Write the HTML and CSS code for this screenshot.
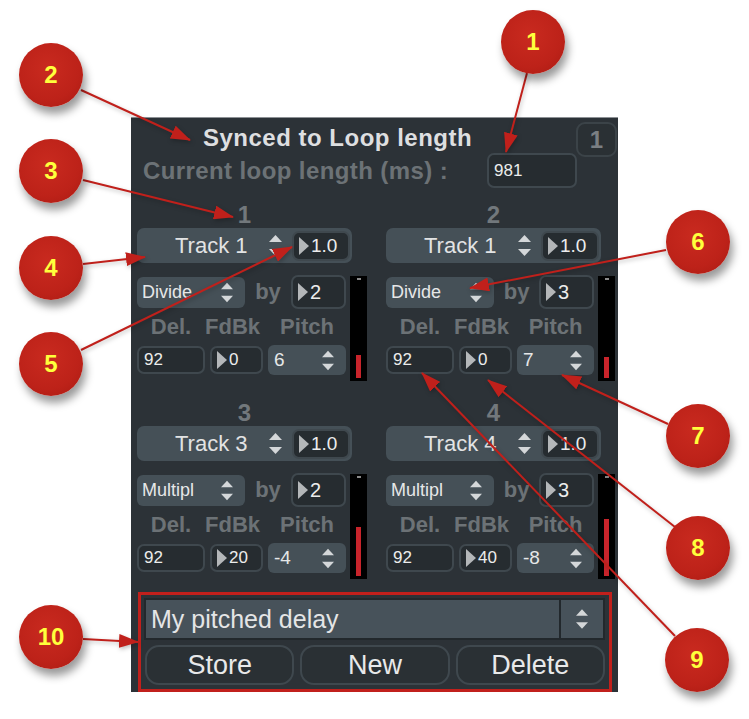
FILE: index.html
```html
<!DOCTYPE html>
<html lang="en">
<head>
    <meta charset="UTF-8">
    <title>Synced to Loop length</title>
    <link rel="stylesheet" href="styles.css">
</head>
<body>
<div class="page">

    <div class="panel">
        <div class="head">
            <div class="title">Synced to Loop length</div>
            <div class="badge">1</div>
            <div class="loop-label">Current loop length (ms) :</div>
            <div class="numbox loop-box">981</div>
        </div>

        <div class="voices">
            <!-- voice 1 -->
            <div class="voice">
                <div class="voice-num">1</div>
                <div class="track">
                    <span class="track-name">Track 1</span>
                    <svg class="updown" width="13" height="21" viewBox="0 0 13 21"><polygon points="0,7 6.5,0 13,7"/><polygon points="0,14 13,14 6.5,21"/></svg>
                    <div class="numbox track-box"><i class="play"></i>1.0</div>
                </div>
                <div class="voice-body">
                    <div class="controls">
                        <div class="row-mode">
                            <div class="menu mode-menu">Divide<svg class="updown" width="12" height="21" viewBox="0 0 13 21"><polygon points="0,7 6.5,0 13,7"/><polygon points="0,14 13,14 6.5,21"/></svg></div>
                            <span class="label by">by</span>
                            <div class="numbox by-box"><i class="play"></i>2</div>
                        </div>
                        <div class="row-labels">
                            <span class="label">Del.</span>
                            <span class="label">FdBk</span>
                            <span class="label">Pitch</span>
                        </div>
                        <div class="row-values">
                            <div class="numbox small">92</div>
                            <div class="numbox small"><i class="play"></i>0</div>
                            <div class="menu pitch-menu">6<svg class="updown" width="12" height="21" viewBox="0 0 13 21"><polygon points="0,7 6.5,0 13,7"/><polygon points="0,14 13,14 6.5,21"/></svg></div>
                        </div>
                    </div>
                    <div class="meter"><i class="meter-peak"></i><i class="meter-bar" style="height: 23px"></i></div>
                </div>
            </div>

            <!-- voice 2 -->
            <div class="voice">
                <div class="voice-num">2</div>
                <div class="track">
                    <span class="track-name">Track 1</span>
                    <svg class="updown" width="13" height="21" viewBox="0 0 13 21"><polygon points="0,7 6.5,0 13,7"/><polygon points="0,14 13,14 6.5,21"/></svg>
                    <div class="numbox track-box"><i class="play"></i>1.0</div>
                </div>
                <div class="voice-body">
                    <div class="controls">
                        <div class="row-mode">
                            <div class="menu mode-menu">Divide<svg class="updown" width="12" height="21" viewBox="0 0 13 21"><polygon points="0,7 6.5,0 13,7"/><polygon points="0,14 13,14 6.5,21"/></svg></div>
                            <span class="label by">by</span>
                            <div class="numbox by-box"><i class="play"></i>3</div>
                        </div>
                        <div class="row-labels">
                            <span class="label">Del.</span>
                            <span class="label">FdBk</span>
                            <span class="label">Pitch</span>
                        </div>
                        <div class="row-values">
                            <div class="numbox small">92</div>
                            <div class="numbox small"><i class="play"></i>0</div>
                            <div class="menu pitch-menu">7<svg class="updown" width="12" height="21" viewBox="0 0 13 21"><polygon points="0,7 6.5,0 13,7"/><polygon points="0,14 13,14 6.5,21"/></svg></div>
                        </div>
                    </div>
                    <div class="meter"><i class="meter-peak"></i><i class="meter-bar" style="height: 21px"></i></div>
                </div>
            </div>

            <!-- voice 3 -->
            <div class="voice">
                <div class="voice-num">3</div>
                <div class="track">
                    <span class="track-name">Track 3</span>
                    <svg class="updown" width="13" height="21" viewBox="0 0 13 21"><polygon points="0,7 6.5,0 13,7"/><polygon points="0,14 13,14 6.5,21"/></svg>
                    <div class="numbox track-box"><i class="play"></i>1.0</div>
                </div>
                <div class="voice-body">
                    <div class="controls">
                        <div class="row-mode">
                            <div class="menu mode-menu">Multipl<svg class="updown" width="12" height="21" viewBox="0 0 13 21"><polygon points="0,7 6.5,0 13,7"/><polygon points="0,14 13,14 6.5,21"/></svg></div>
                            <span class="label by">by</span>
                            <div class="numbox by-box"><i class="play"></i>2</div>
                        </div>
                        <div class="row-labels">
                            <span class="label">Del.</span>
                            <span class="label">FdBk</span>
                            <span class="label">Pitch</span>
                        </div>
                        <div class="row-values">
                            <div class="numbox small">92</div>
                            <div class="numbox small"><i class="play"></i>20</div>
                            <div class="menu pitch-menu">-4<svg class="updown" width="12" height="21" viewBox="0 0 13 21"><polygon points="0,7 6.5,0 13,7"/><polygon points="0,14 13,14 6.5,21"/></svg></div>
                        </div>
                    </div>
                    <div class="meter"><i class="meter-peak"></i><i class="meter-bar" style="height: 49px"></i></div>
                </div>
            </div>

            <!-- voice 4 -->
            <div class="voice">
                <div class="voice-num">4</div>
                <div class="track">
                    <span class="track-name">Track 4</span>
                    <svg class="updown" width="13" height="21" viewBox="0 0 13 21"><polygon points="0,7 6.5,0 13,7"/><polygon points="0,14 13,14 6.5,21"/></svg>
                    <div class="numbox track-box"><i class="play"></i>1.0</div>
                </div>
                <div class="voice-body">
                    <div class="controls">
                        <div class="row-mode">
                            <div class="menu mode-menu">Multipl<svg class="updown" width="12" height="21" viewBox="0 0 13 21"><polygon points="0,7 6.5,0 13,7"/><polygon points="0,14 13,14 6.5,21"/></svg></div>
                            <span class="label by">by</span>
                            <div class="numbox by-box"><i class="play"></i>3</div>
                        </div>
                        <div class="row-labels">
                            <span class="label">Del.</span>
                            <span class="label">FdBk</span>
                            <span class="label">Pitch</span>
                        </div>
                        <div class="row-values">
                            <div class="numbox small">92</div>
                            <div class="numbox small"><i class="play"></i>40</div>
                            <div class="menu pitch-menu">-8<svg class="updown" width="12" height="21" viewBox="0 0 13 21"><polygon points="0,7 6.5,0 13,7"/><polygon points="0,14 13,14 6.5,21"/></svg></div>
                        </div>
                    </div>
                    <div class="meter"><i class="meter-peak"></i><i class="meter-bar" style="height: 57px"></i></div>
                </div>
            </div>
        </div>

        <!-- preset manager -->
        <div class="presets">
            <div class="preset-menu">
                <span class="preset-name">My pitched delay</span>
                <div class="preset-arrows">
                    <svg class="updown" width="12" height="22" viewBox="0 0 13 21"><polygon points="0,7 6.5,0 13,7"/><polygon points="0,14 13,14 6.5,21"/></svg>
                </div>
            </div>
            <div class="preset-buttons">
                <button>Store</button>
                <button>New</button>
                <button>Delete</button>
            </div>
        </div>
    </div>

    <!-- annotation arrows -->
    <svg class="arrows" width="749" height="719" viewBox="0 0 749 719">
        <defs>
            <marker id="head" markerUnits="userSpaceOnUse" markerWidth="20" markerHeight="14" refX="19" refY="7" orient="auto" viewBox="0 0 20 14">
                <path d="M0 0 L20 7 L0 14 z" fill="#c0201b"/>
            </marker>
        </defs>
        <g stroke="#c0201b" stroke-width="2" marker-end="url(#head)">
            <line x1="527" y1="73" x2="506" y2="152"/>
            <line x1="81" y1="90" x2="190" y2="140"/>
            <line x1="83" y1="180" x2="233" y2="217"/>
            <line x1="83" y1="264" x2="145" y2="257"/>
            <line x1="81" y1="350" x2="292" y2="247"/>
            <line x1="666" y1="250" x2="470" y2="288"/>
            <line x1="668" y1="424" x2="562" y2="375"/>
            <line x1="675" y1="527" x2="488" y2="380"/>
            <line x1="675" y1="636" x2="422" y2="373"/>
            <line x1="83" y1="639" x2="138" y2="642"/>
        </g>
    </svg>

    <div class="callout" style="left: 501px; top: 10px">1</div>
    <div class="callout" style="left: 19px; top: 43px">2</div>
    <div class="callout" style="left: 19px; top: 139px">3</div>
    <div class="callout" style="left: 19px; top: 236px">4</div>
    <div class="callout" style="left: 19px; top: 332px">5</div>
    <div class="callout" style="left: 666px; top: 210px">6</div>
    <div class="callout" style="left: 666px; top: 404px">7</div>
    <div class="callout" style="left: 666px; top: 516px">8</div>
    <div class="callout" style="left: 665px; top: 628px">9</div>
    <div class="callout" style="left: 19px; top: 605px">10</div>

</div>
</body>
</html>
```

FILE: styles.css
```css
body { margin: 0; background: #fff; font-family: "Liberation Sans", Arial, sans-serif; }
.page { position: relative; width: 749px; height: 719px; overflow: hidden; }

/* main patch panel */
.panel { margin: 117px 0 0 131px; width: 487px; height: 575px; box-sizing: border-box; padding-top: 4px; background: #2c3237; border-top: 1px solid #8d9195; }

.head { margin-left: 12px; display: grid; grid-template-columns: 344px 89px 41px; grid-template-rows: 31px 35px; }
.title { grid-column: 1 / 3; grid-row: 1; padding-left: 60px; align-self: center; font-size: 24px; letter-spacing: 0.5px; font-weight: bold; color: #dedfe0; white-space: nowrap; }
.badge { grid-column: 3; grid-row: 1; height: 35px; box-sizing: border-box; border: 2px solid #3b4348; border-radius: 9px; background: #2a3034; color: #7a7f83; font-size: 24px; font-weight: bold; display: flex; align-items: center; justify-content: center; }
.loop-label { grid-column: 1; grid-row: 2; align-self: center; font-size: 24px; letter-spacing: 0.4px; font-weight: bold; color: #6c7276; white-space: nowrap; }
.loop-box { grid-column: 2; grid-row: 2; width: 90px; font-size: 19px; }

.numbox { box-sizing: border-box; display: flex; align-items: center; padding-left: 5px; background: #262c30; border: 2px solid #3f484e; border-radius: 7px; color: #ececec; font-size: 17px; }
.play { display: inline-block; width: 0; height: 0; border-top: 9px solid transparent; border-bottom: 9px solid transparent; border-left: 10px solid #b4b7b9; margin-right: 2px; }
.updown { fill: #d4d7d9; flex: none; }

.voices { margin: 14px 0 0 6px; display: grid; grid-template-columns: 230px 229px; column-gap: 19px; row-gap: 19px; }
.voice-num { width: 215px; height: 26px; line-height: 26px; text-align: center; font-size: 24px; font-weight: bold; color: #72787c; }
.track { width: 215px; height: 35px; box-sizing: border-box; display: flex; align-items: center; background: #455057; border-radius: 7px; }
.track-name { flex: 1; padding-left: 38px; font-size: 22px; color: #e2e3e4; white-space: nowrap; }
.track .updown { margin-right: 10px; }
.track-box { width: 58px; height: 30px; margin-right: 2px; font-size: 19px; }

.voice-body { display: flex; gap: 4px; margin-top: 12px; }
.controls { width: 209px; display: grid; grid-template-rows: 34px 36px 30px; }
.row-mode { display: grid; grid-template-columns: 108px 1fr 55px; align-items: center; }
.menu { box-sizing: border-box; display: flex; align-items: center; justify-content: space-between; background: #455057; border-radius: 6px; color: #e6e7e8; padding: 0 12px 0 5px; }
.mode-menu { height: 31px; font-size: 18px; }
.by-box { height: 34px; font-size: 20px; }
.label { font-size: 22px; font-weight: bold; color: #6c7276; text-align: center; }
.by { justify-self: center; }
.row-labels, .row-values { display: grid; grid-template-columns: 68px 53px 1fr; column-gap: 5px; align-items: center; }
.row-labels .label:nth-child(2) { margin-left: -8px; }
.small { height: 28px; font-size: 17px; }
.pitch-menu { height: 30px; font-size: 19px; padding-left: 6px; }

.meter { width: 17px; height: 105px; margin-top: 1px; background: #000; display: flex; flex-direction: column; align-items: center; justify-content: space-between; padding: 2px 0 3px; box-sizing: border-box; }
.meter-peak { width: 4px; height: 2px; background: #8a8a8a; }
.meter-bar { width: 5px; background: #c8242b; }

/* preset manager */
.presets { margin: 13px 6px 0 7px; height: 100px; box-sizing: border-box; border: 3px solid #c1201c; padding: 3px 4px 4px 3px; }
.preset-menu { height: 42px; box-sizing: border-box; display: flex; align-items: stretch; background: #47525a; border: 2px solid #22282c; }
.preset-name { flex: 1; display: flex; align-items: center; padding-left: 5px; font-size: 25px; color: #e4e5e6; }
.preset-arrows { width: 42px; border-left: 2px solid #22282c; display: flex; align-items: center; justify-content: center; }
.preset-buttons { display: grid; grid-template-columns: repeat(3, 1fr); column-gap: 6px; margin: 5px 0 0 1px; }
.preset-buttons button { height: 40px; background: #2a3034; border: 2px solid #3f484e; border-radius: 14px; color: #e8e9ea; font-family: "Liberation Sans", Arial, sans-serif; font-size: 27px; padding: 0; }

/* annotations */
.arrows { position: absolute; left: 0; top: 0; filter: drop-shadow(1px 2px 2px rgba(0, 0, 0, 0.25)); }
.callout { position: absolute; width: 64px; height: 64px; border-radius: 50%; background: radial-gradient(circle at 45% 40%, #c92a1f 0%, #bd2219 60%, #a81a12 100%); box-shadow: 3px 7px 9px rgba(0, 0, 0, 0.4); color: #ffff3c; font-size: 24px; font-weight: bold; display: flex; align-items: center; justify-content: center; }
```
